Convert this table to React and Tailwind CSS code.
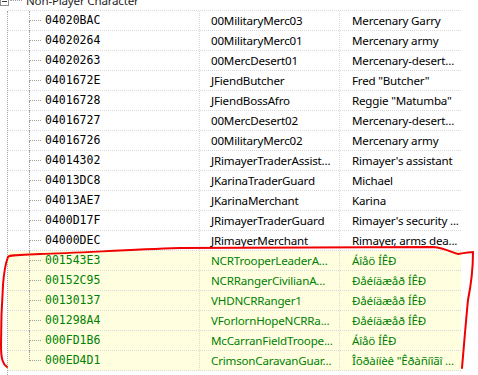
const ROWS = [
  ['04020BAC', '00MilitaryMerc03', 'Mercenary Garry'],
  ['04020264', '00MilitaryMerc01', 'Mercenary army'],
  ['04020263', '00MercDesert01', 'Mercenary-desert...'],
  ['0401672E', 'JFiendButcher', 'Fred "Butcher"'],
  ['04016728', 'JFiendBossAfro', 'Reggie "Matumba"'],
  ['04016727', '00MercDesert02', 'Mercenary-desert...'],
  ['04016726', '00MilitaryMerc02', 'Mercenary army'],
  ['04014302', 'JRimayerTraderAssist...', "Rimayer's assistant"],
  ['04013DC8', 'JKarinaTraderGuard', 'Michael'],
  ['04013AE7', 'JKarinaMerchant', 'Karina'],
  ['0400D17F', 'JRimayerTraderGuard', "Rimayer's security ..."],
  ['04000DEC', 'JRimayerMerchant', 'Rimayer, arms dea...'],
  ['001543E3', 'NCRTrooperLeaderA...', 'Áîåö ÍÊÐ', true],
  ['00152C95', 'NCRRangerCivilianA...', 'Ðåéíäæåð ÍÊÐ', true],
  ['00130137', 'VHDNCRRanger1', 'Ðåéíäæåð ÍÊÐ', true],
  ['001298A4', 'VForlornHopeNCRRa...', 'Ðåéíäæåð ÍÊÐ', true],
  ['000FD1B6', 'McCarranFieldTroope...', 'Áîåö ÍÊÐ', true],
  ['000ED4D1', 'CrimsonCaravanGuar...', 'Îõðàííèê "Êðàñíîãî ...', true],
];

const UI = "font-['Noto_Sans',sans-serif] text-[11.6px] tracking-[-0.2px]";

function Row({ id, edid, name, added, last }) {
  const color = added ? 'text-[#008000]' : 'text-black';
  return (
    <div
      className={`flex h-[20px] w-[453px] border-b border-dotted border-[#d9d9d9] ${added ? 'bg-[#ffffe0]' : ''}`}
    >
      {/* tree + form id */}
      <div className="flex h-full w-[192px] border-r border-dotted border-[#d9d9d9]">
        <div className="w-[21px]" />
        <div className="flex h-[20px] w-[12px] flex-col">
          <div className="h-[10px] border-b border-l border-dotted border-[#a0a0a0]" />
          <div className={`flex-1 ${last ? '' : 'border-l border-dotted border-[#a0a0a0]'}`} />
        </div>
        <div
          className={`flex items-center pl-[4px] font-['DejaVu_Sans_Mono',monospace] text-[11.5px] ${color}`}
        >
          {id}
        </div>
      </div>
      <div className={`flex h-full w-[140px] items-center border-r border-dotted border-[#d9d9d9] pl-[11px] whitespace-nowrap overflow-hidden ${UI} ${color}`}>
        {edid}
      </div>
      <div className={`flex h-full w-[121px] items-center pl-[12px] whitespace-nowrap ${UI} ${color}`}>
        {name}
      </div>
    </div>
  );
}

export default function App() {
  return (
    <div className="relative h-[375px] w-[478px] overflow-hidden bg-white">
      <div className="-mt-[9px] flex">
        {/* left gutter: expander and root line */}
        <div className="flex w-[8px] flex-col">
          <div className="flex h-[20px] items-center">
            <div className="flex h-[9px] w-[9px] shrink-0 items-center justify-center border border-[#919191] bg-white">
              <div className="h-px w-[5px] bg-[#3c3c3c]" />
            </div>
          </div>
          <div className="flex-1 border-r border-dotted border-[#a0a0a0]" />
        </div>

        <div className="flex flex-col">
          <div className="flex h-[20px] w-[453px] items-center border-b border-dotted border-[#d9d9d9]">
            <div className="ml-[2px] w-[12px] border-t border-dotted border-[#a0a0a0]" />
            <span className={`ml-[4px] whitespace-nowrap text-[#1e1e1e] ${UI}`}>Non-Player Character</span>
          </div>
          {ROWS.map(([id, edid, name, added], i) => (
            <Row key={id} id={id} edid={edid} name={name} added={added} last={i === ROWS.length - 1} />
          ))}
          <div className="h-[20px]" />
        </div>
      </div>

      {/* hand-drawn red annotation */}
      <svg className="pointer-events-none absolute left-0 top-0" width="478" height="375" viewBox="0 0 478 375">
        <path
          d="M7 367 C3 364 1 360 1 345 C1 320 2 300 3 285 C4 272 6 262 8 257 C9 255 20 255 40 254 C80 253 120 250 180 248 C240 247 320 247 433 247 C446 248 452 253 458 254 C464 253 470 252 473 252 C473 270 470 290 468 300 C466 320 464 345 462 368"
          fill="none"
          stroke="#f00000"
          strokeWidth="2"
          strokeLinecap="round"
          strokeLinejoin="round"
        />
      </svg>
    </div>
  );
}
